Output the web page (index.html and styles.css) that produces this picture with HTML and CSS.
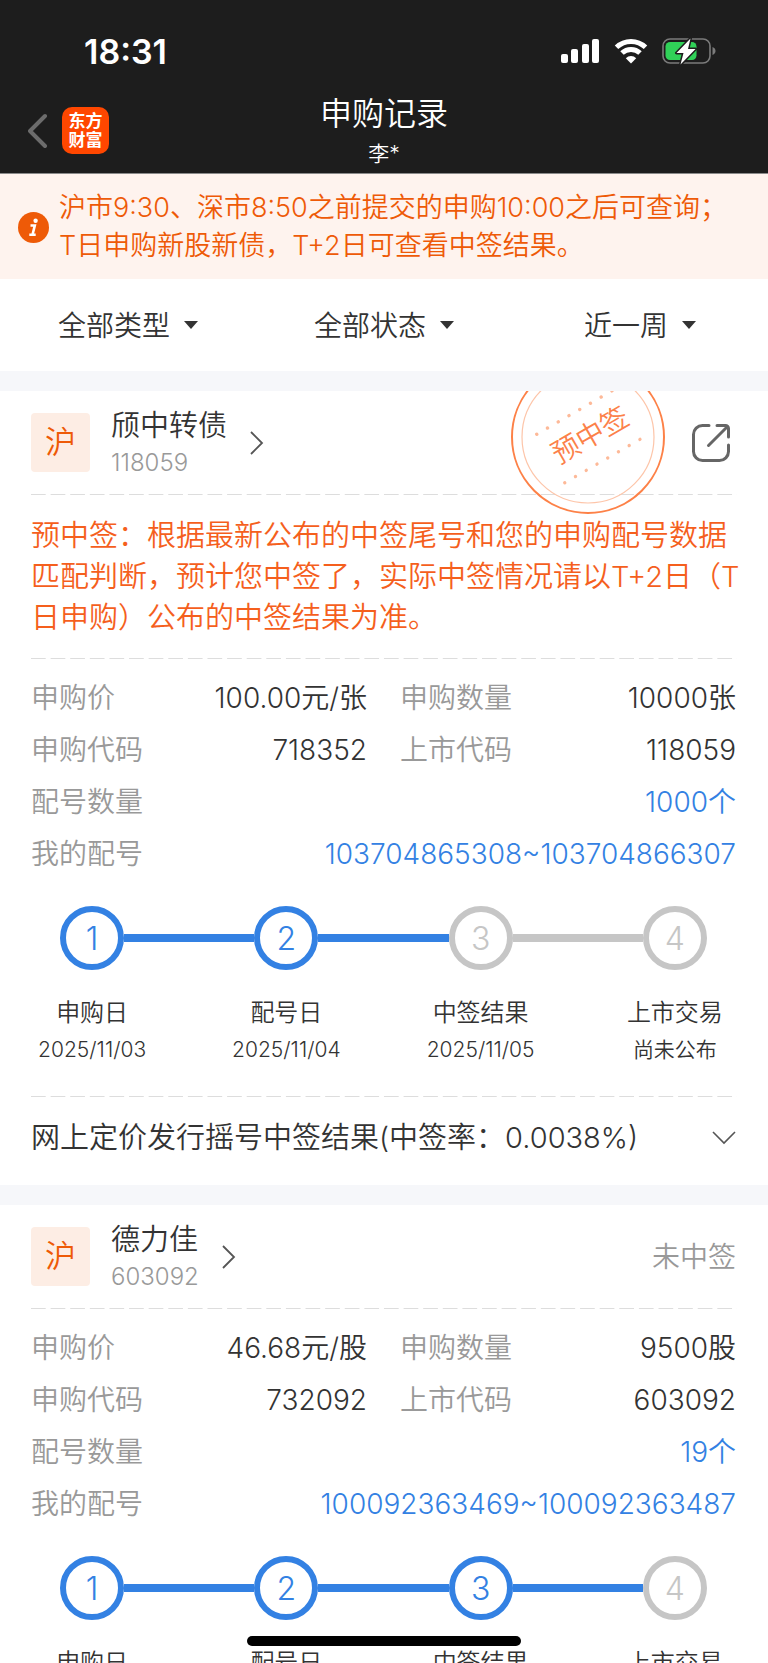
FILE: index.html
```html
<!DOCTYPE html>
<html lang="zh-CN">
<head>
<meta charset="utf-8">
<meta name="viewport" content="width=device-width, initial-scale=1">
<title>申购记录</title>
<link rel="stylesheet" href="styles.css">
</head>
<body>
<div class="app">
  <header class="topbar">
    <div class="status">
      <time class="clock">18:31</time>
      <div class="status-icons">
        <svg width="40" height="26" viewBox="0 0 40 26" fill="#fff" aria-hidden="true">
          <rect x="1" y="16" width="7" height="9" rx="2"/>
          <rect x="11" y="11" width="7" height="14" rx="2"/>
          <rect x="22" y="6" width="7" height="19" rx="2"/>
          <rect x="32" y="1" width="7" height="24" rx="2"/>
        </svg>
        <svg width="34" height="26" viewBox="0 0 34 26" fill="none" stroke="#fff" aria-hidden="true">
          <path d="M2.500 9.200a21 21 0 0 1 29 0" stroke-width="5"/>
          <path d="M8 15a13 13 0 0 1 18 0" stroke-width="5"/>
          <path d="M17 25.500l-5.200-5.300a7.500 7.500 0 0 1 10.400 0z" fill="#fff" stroke="none"/>
        </svg>
        <svg width="54" height="28" viewBox="0 0 54 28" aria-hidden="true">
          <rect x="1" y="2" width="47" height="24" rx="7" fill="none" stroke="#7b7b7b" stroke-width="1.600"/>
          <path d="M50.500 10v8c2-.8 3-2.200 3-4s-1-3.200-3-4z" fill="#7b7b7b"/>
          <rect x="3.500" y="5" width="31" height="18" rx="4.500" fill="#30d158"/>
          <path d="M28.500 1.500L14.500 16h7l-3 11.500L33.500 12h-7.500z" fill="#fff" stroke="#1d1d1d" stroke-width="3" stroke-linejoin="round" paint-order="stroke"/>
        </svg>
      </div>
    </div>
    <nav class="nav">
      <div class="nav-left">
        <button class="icon-button" type="button" aria-label="返回">
          <svg width="20" height="36" viewBox="0 0 20 36" fill="none" stroke="#6c6c6c" stroke-width="4" stroke-linecap="round" stroke-linejoin="round"><path d="M17 3L2 18l15 15"/></svg>
        </button>
        <a class="logo" href="#home">东方<br>财富</a>
      </div>
      <div class="heading">
        <h1 class="title">申购记录</h1>
        <p class="subtitle">李*</p>
      </div>
    </nav>
  </header>

  <main class="content">
    <section class="notice">
      <svg class="notice-icon" width="31" height="31" viewBox="0 0 31 31" aria-hidden="true">
        <circle cx="15.500" cy="15.500" r="15.500" fill="#ee5a07"/>
        <circle cx="17.600" cy="8.800" r="2.200" fill="#fff"/>
        <path d="M12.500 13.500h4.300l-2.300 9.200M11.300 22.800h6.400" fill="none" stroke="#fff" stroke-width="2.600"/>
      </svg>
      <p class="notice-text">沪市9:30、深市8:50之前提交的申购10:00之后可查询；<br>T日申购新股新债，T+2日可查看中签结果。</p>
    </section>

    <form class="filters">
      <label class="filter">
        <select class="filter-select" aria-label="类型"><option>全部类型</option></select>
        <svg width="14" height="8" viewBox="0 0 14 8" fill="#333" aria-hidden="true"><path d="M0 0h14L7 8z"/></svg>
      </label>
      <label class="filter">
        <select class="filter-select" aria-label="状态"><option>全部状态</option></select>
        <svg width="14" height="8" viewBox="0 0 14 8" fill="#333" aria-hidden="true"><path d="M0 0h14L7 8z"/></svg>
      </label>
      <label class="filter">
        <select class="filter-select" aria-label="时间"><option>近一周</option></select>
        <svg width="14" height="8" viewBox="0 0 14 8" fill="#333" aria-hidden="true"><path d="M0 0h14L7 8z"/></svg>
      </label>
    </form>

    <article class="card">
      <svg class="stamp" width="156" height="156" viewBox="-78 -78 156 156" role="img" aria-label="预中签">
        <circle r="76" fill="none" stroke="#fd8147" stroke-width="2"/>
        <circle r="66" fill="none" stroke="#fdc5a9" stroke-width="1.200"/>
        <g transform="rotate(-30)" fill="none" stroke="#fdb998" stroke-width="3.400" stroke-linecap="round">
          <path d="M-43-28H46" stroke-dasharray="0 12.400"/>
          <path d="M-43 28H46" stroke-dasharray="0 12.400"/>
        </g>
        <text class="stamp-text" transform="translate(2 -2) rotate(-30)" y="10" text-anchor="middle">预中签</text>
      </svg>
      <div class="card-head">
        <span class="market">沪</span>
        <a class="stock" href="#118059">
          <span class="stock-info">
            <strong class="stock-name">颀中转债</strong>
            <span class="stock-code">118059</span>
          </span>
          <svg width="14" height="26" viewBox="0 0 14 26" fill="none" stroke="#555" stroke-width="1.800" aria-hidden="true"><path d="M1 2l11 11L1 24"/></svg>
        </a>
        <button class="icon-button share" type="button" aria-label="分享">
          <svg width="40" height="40" viewBox="0 0 40 40" fill="none" stroke="#666" stroke-width="3" stroke-linecap="round"><path d="M18 2.500h-6.500a9 9 0 0 0-9 9v17a9 9 0 0 0 9 9h17a9 9 0 0 0 9-9V22"/><path d="M26 2.500h8.500a3 3 0 0 1 3 3V14M36.500 3.500L17.500 22.500"/></svg>
        </button>
      </div>
      <hr class="dash">
      <p class="hint">预中签：根据最新公布的中签尾号和您的申购配号数据匹配判断，预计您中签了，实际中签情况请以T+2日（T日申购）公布的中签结果为准。</p>
      <hr class="dash">
      <dl class="facts">
        <div class="fact"><dt>申购价</dt><dd>100.00元/张</dd></div>
        <div class="fact"><dt>申购数量</dt><dd>10000张</dd></div>
        <div class="fact"><dt>申购代码</dt><dd>718352</dd></div>
        <div class="fact"><dt>上市代码</dt><dd>118059</dd></div>
        <div class="fact wide"><dt>配号数量</dt><dd><a href="#numbers-118059">1000个</a></dd></div>
        <div class="fact wide"><dt>我的配号</dt><dd><a href="#numbers-118059">103704865308~103704866307</a></dd></div>
      </dl>
      <ol class="steps">
        <li class="step done"><span class="mark">1</span><span class="step-name">申购日</span><span class="step-date">2025/11/03</span></li>
        <li class="step done"><span class="mark">2</span><span class="step-name">配号日</span><span class="step-date">2025/11/04</span></li>
        <li class="step"><span class="mark">3</span><span class="step-name">中签结果</span><span class="step-date">2025/11/05</span></li>
        <li class="step"><span class="mark">4</span><span class="step-name">上市交易</span><span class="step-date">尚未公布</span></li>
      </ol>
      <hr class="dash">
      <button class="result" type="button" aria-expanded="false">
        <span>网上定价发行摇号中签结果(中签率：0.0038%)</span>
        <svg width="24" height="14" viewBox="0 0 24 14" fill="none" stroke="#555" stroke-width="1.600" aria-hidden="true"><path d="M1 1l11 11L23 1"/></svg>
      </button>
    </article>

    <article class="card">
      <div class="card-head">
        <span class="market">沪</span>
        <a class="stock" href="#603092">
          <span class="stock-info">
            <strong class="stock-name">德力佳</strong>
            <span class="stock-code">603092</span>
          </span>
          <svg width="14" height="26" viewBox="0 0 14 26" fill="none" stroke="#555" stroke-width="1.800" aria-hidden="true"><path d="M1 2l11 11L1 24"/></svg>
        </a>
        <span class="outcome">未中签</span>
      </div>
      <hr class="dash">
      <dl class="facts">
        <div class="fact"><dt>申购价</dt><dd>46.68元/股</dd></div>
        <div class="fact"><dt>申购数量</dt><dd>9500股</dd></div>
        <div class="fact"><dt>申购代码</dt><dd>732092</dd></div>
        <div class="fact"><dt>上市代码</dt><dd>603092</dd></div>
        <div class="fact wide"><dt>配号数量</dt><dd><a href="#numbers-603092">19个</a></dd></div>
        <div class="fact wide"><dt>我的配号</dt><dd><a href="#numbers-603092">100092363469~100092363487</a></dd></div>
      </dl>
      <ol class="steps">
        <li class="step done"><span class="mark">1</span><span class="step-name">申购日</span></li>
        <li class="step done"><span class="mark">2</span><span class="step-name">配号日</span></li>
        <li class="step done"><span class="mark">3</span><span class="step-name">中签结果</span></li>
        <li class="step"><span class="mark">4</span><span class="step-name">上市交易</span></li>
      </ol>
    </article>
  </main>
  <div class="home-indicator"></div>
</div>
</body>
</html>
```
FILE: styles.css
```css
* {
  box-sizing: border-box;
}

body,
h1,
p,
dl,
dd,
ol {
  margin: 0;
  padding: 0;
}

body {
  background: #f6f7fa;
  color: #333;
  font-family: Inter, "Noto Sans CJK SC", sans-serif;
  font-size: 28px;
  font-weight: 350;
}

a {
  color: inherit;
  text-decoration: none;
}

button {
  padding: 0;
  border: 0;
  background: none;
  color: inherit;
  font: inherit;
}

svg {
  display: block;
  flex: none;
}

.app {
  display: flex;
  flex-direction: column;
  height: 100vh;
}

/* Status bar and title */
.topbar {
  flex: none;
  background: #1d1d1d;
  border-bottom: 1px solid #8a8a8a;
  color: #fff;
}

.status {
  display: flex;
  justify-content: space-between;
  align-items: center;
  height: 88px;
  padding: 14px 52px 0 84px;
}

.clock {
  font-size: 34px;
  font-weight: 600;
}

.status-icons {
  display: flex;
  align-items: center;
  gap: 14px;
}

.nav {
  display: grid;
  grid-template-columns: 1fr auto 1fr;
  height: 85px;
}

.nav-left {
  display: flex;
  align-items: center;
  gap: 14px;
  padding: 0 0 0 28px;
}

.icon-button {
  cursor: pointer;
}

.logo {
  display: grid;
  place-content: center;
  width: 47px;
  height: 47px;
  border-radius: 10px;
  background: #ff4700;
  font-size: 17px;
  font-weight: 700;
  line-height: 19px;
}

.heading {
  text-align: center;
}

.title {
  font-size: 32px;
  font-weight: inherit;
  line-height: 52px;
}

.subtitle {
  font-size: 21px;
  line-height: 28px;
}

/* Scrolling content */
.content {
  flex: 1;
  min-height: 0;
  overflow: hidden auto;
  scrollbar-width: none;
}

.notice {
  display: flex;
  align-items: center;
  gap: 10px;
  padding: 15px 18px 14px;
  background: #fef3ee;
  color: #ee5a07;
}

.notice-icon {
  flex: none;
}

.notice-text {
  font-size: 27px;
  line-height: 38px;
  white-space: nowrap;
}

.filters {
  display: grid;
  grid-template-columns: repeat(3, 1fr);
  height: 92px;
  background: #fff;
}

.filter {
  display: flex;
  justify-content: center;
  align-items: center;
  gap: 13px;
}

.filter-select {
  appearance: none;
  padding: 2px 0 0;
  border: 0;
  background: none;
  color: #333;
  font: inherit;
  line-height: 42px;
}

/* Record cards */
.card {
  position: relative;
  margin-top: 20px;
  padding: 0 32px 0 31px;
  overflow: hidden;
  background: #fff;
}

.card-head {
  display: flex;
  align-items: center;
  height: 103px;
}

.market {
  width: 59px;
  height: 59px;
  border-radius: 4px;
  background: #fdede4;
  color: #ee5a07;
  font-size: 31px;
  line-height: 58px;
  text-align: center;
}

.stock {
  display: flex;
  align-items: center;
  gap: 23px;
  margin-left: 21px;
}

.stock-info {
  display: grid;
  padding-top: 2px;
}

.stock-name {
  font-weight: inherit;
  font-size: 29px;
  line-height: 38px;
}

.stock-code {
  color: #999;
  font-size: 24px;
  line-height: 36px;
}

.share,
.outcome {
  margin-left: auto;
}

.share {
  margin-right: 5px;
}

.outcome {
  padding-bottom: 4px;
  color: #999;
}

.stamp {
  position: absolute;
  top: -32px;
  right: 102px;
}

.stamp-text {
  fill: #fc8149;
  font-size: 28px;
}

.dash {
  height: 1px;
  margin: 0 -1px 0 0;
  border: 0;
  background: linear-gradient(90deg, #ddd 76%, transparent 76%) 0 0 / calc(100% / 36) 1px;
}

.hint {
  margin-right: -8px;
  padding: 20px 0;
  color: #f55f1d;
  font-size: 29px;
  line-height: 41px;
}

.facts {
  display: grid;
  grid-template-columns: 1fr 1fr;
  column-gap: 33px;
  padding-top: 13px;
  line-height: 52px;
}

.fact {
  display: flex;
  justify-content: space-between;
  white-space: nowrap;
}

.wide {
  grid-column: 1 / -1;
}

.fact dt {
  color: #999;
}

.fact a {
  color: #3381e3;
}

/* Progress */
.steps {
  display: grid;
  grid-template-columns: repeat(4, 1fr);
  margin: 0 -36px;
  padding: 26px 0 28px;
  list-style: none;
}

.step {
  --mark: #c6c6c6;
  --after: #c6c6c6;
  display: grid;
  grid-template-columns: 1fr 64px 1fr;
  align-items: center;
  text-align: center;
}

.done {
  --mark: #3381e3;
  --after: #3381e3;
}

.step::before,
.step::after {
  height: 8px;
  background: var(--after);
  content: "";
}

.step::before {
  order: -2;
}

.mark {
  order: -1;
}

.step::after {
  order: -1;
}

.done + .step::before {
  background: #3381e3;
}

.step:first-child::before,
.step:last-child::after {
  visibility: hidden;
}

.mark {
  display: grid;
  place-items: center;
  height: 64px;
  border: 6px solid var(--mark);
  border-radius: 50%;
  color: var(--mark);
  font-size: 32px;
  font-weight: 300;
}

.step-name,
.step-date {
  grid-column: 1 / -1;
}

.step-name {
  margin-top: 24px;
  font-size: 24px;
  line-height: 38px;
}

.step-date {
  font-size: 21px;
  line-height: 36px;
}

.result {
  display: flex;
  justify-content: space-between;
  align-items: center;
  width: 100%;
  height: 88px;
  padding-bottom: 6px;
  font-size: 29px;
  line-height: 38px;
  text-align: left;
  white-space: nowrap;
}

.home-indicator {
  position: fixed;
  bottom: 17px;
  left: 50%;
  width: 274px;
  height: 10px;
  margin-left: -137px;
  border-radius: 5px;
  background: #000;
}
```
